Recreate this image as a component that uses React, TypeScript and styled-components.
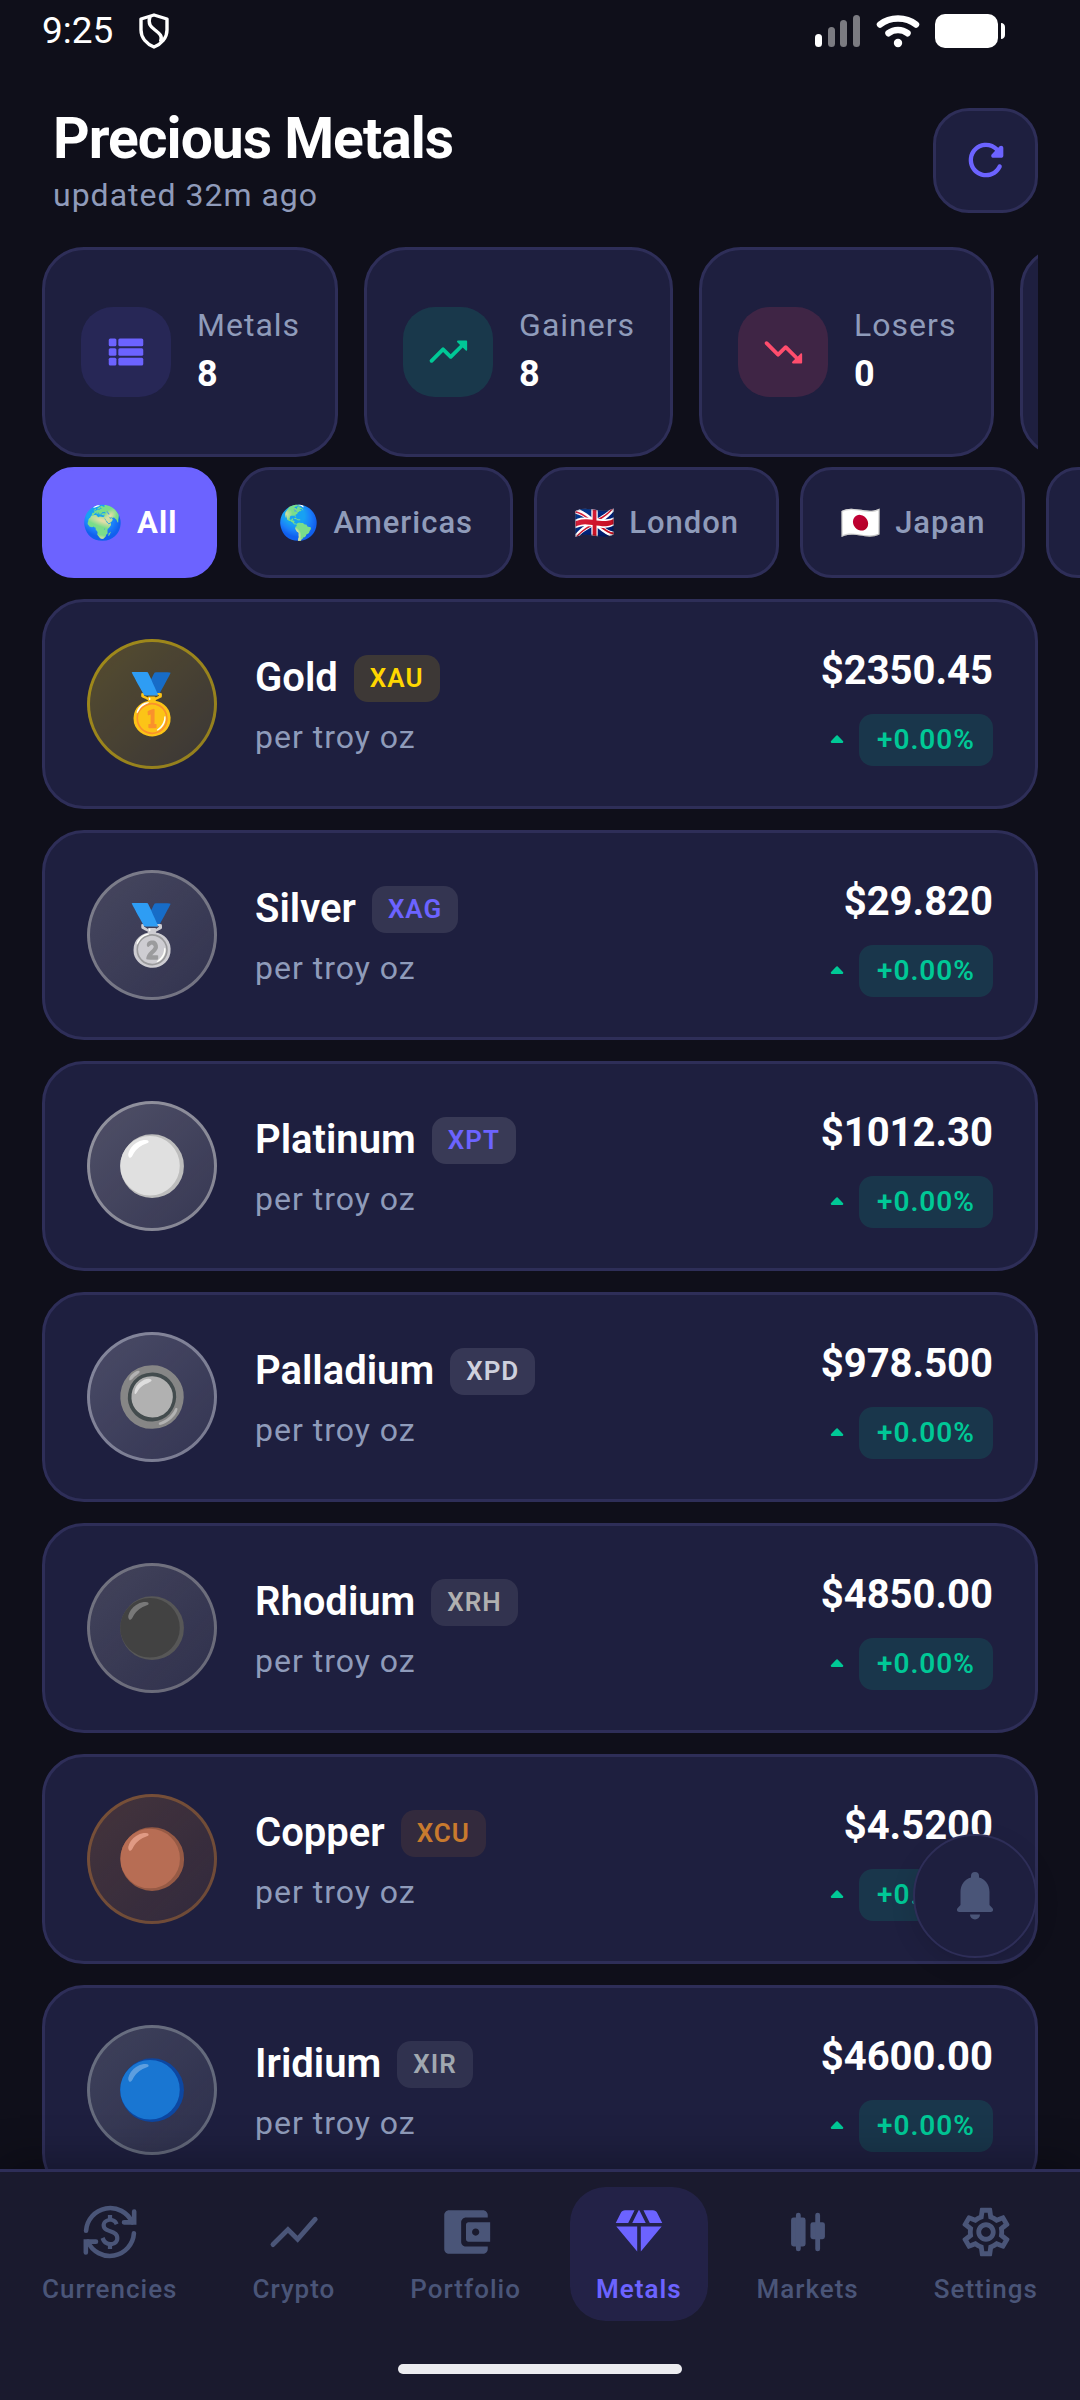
import React from "react";
import styled, { createGlobalStyle } from "styled-components";
import { MdOutlineSettings } from "react-icons/md";

const color = {
  page: "#0f0f1a",
  card: "#1e1f3f",
  line: "#2e2e58",
  nav: "#1a1a2e",
  primary: "#6c63ff",
  up: "#00c896",
  down: "#ff4d6d",
  muted: "#8f9bba",
  idle: "#4a5578",
  white: "#ffffff",
};

const GlobalStyle = createGlobalStyle`
  *, *::before, *::after { box-sizing: border-box; }
  body {
    margin: 0;
    background: ${color.page};
    color: ${color.white};
    font-family: Roboto, "Noto Color Emoji", sans-serif;
  }
  button { font: inherit; color: inherit; cursor: pointer; }
  svg { display: block; flex: none; }
`;

/* ---------- page frame ---------- */

const Screen = styled.div`
  position: relative;
  display: flex;
  flex-direction: column;
  height: 100vh;
  overflow: hidden;
`;

const StatusBar = styled.div`
  display: flex;
  align-items: center;
  justify-content: space-between;
  height: 62px;
  padding: 0 74px 0 42px;
`;

const StatusGroup = styled.div`
  display: flex;
  align-items: center;
  gap: ${(p: { $gap: number }) => p.$gap}px;
`;

const Clock = styled.span`
  font-size: 37px;
  line-height: 42px;
`;

const Header = styled.header`
  display: flex;
  align-items: center;
  justify-content: space-between;
  padding: 42px 42px 0 53px;
`;

const Title = styled.h1`
  margin: 0;
  font-size: 57px;
  line-height: 70px;
  font-weight: 700;
  letter-spacing: -1px;
`;

const Updated = styled.p`
  margin: 0;
  font-size: 32px;
  line-height: 42px;
  letter-spacing: 1px;
  color: ${color.muted};
`;

const RefreshButton = styled.button`
  display: grid;
  place-items: center;
  width: 105px;
  height: 105px;
  padding: 0;
  border: 3px solid ${color.line};
  border-radius: 36px;
  background: ${color.card};
  color: ${color.primary};
`;

/* ---------- summary cards ---------- */

const Stats = styled.section`
  display: flex;
  flex: none;
  gap: 26px;
  margin: 31px 42px 0;
  overflow: hidden;
`;

const StatCard = styled.div`
  display: flex;
  flex: none;
  align-items: center;
  gap: 26px;
  min-width: 120px;
  height: 210px;
  padding: 0 35px 0 36px;
  border: 3px solid ${color.line};
  border-radius: 42px;
  background: ${color.card};
`;

const StatIcon = styled.span<{ $tone: string; $alpha: string }>`
  display: grid;
  place-items: center;
  width: 90px;
  height: 90px;
  border-radius: 32px;
  color: ${(p) => p.$tone};
  background: ${(p) => p.$tone + p.$alpha};
`;

const StatText = styled.div`
  display: flex;
  flex-direction: column;
  gap: 5px;
`;

const Caption = styled.span`
  font-size: 32px;
  line-height: 38px;
  letter-spacing: 1px;
  color: ${color.muted};
`;

const StatValue = styled.strong`
  font-size: 36px;
  line-height: 50px;
  font-weight: 700;
`;

/* ---------- region filter ---------- */

const Filters = styled.div`
  display: flex;
  flex: none;
  gap: 21px;
  margin-top: 10px;
  padding-left: 42px;
  overflow: hidden;
`;

const Chip = styled.button<{ $active?: boolean }>`
  display: flex;
  flex: none;
  align-items: center;
  gap: 14px;
  min-width: 120px;
  height: 111px;
  padding: 0 37px;
  border: 3px solid ${(p) => (p.$active ? color.primary : color.line)};
  border-radius: 32px;
  background: ${(p) => (p.$active ? color.primary : color.card)};
  color: ${(p) => (p.$active ? color.white : color.muted)};
  font-size: 31px;
  line-height: 38px;
  font-weight: ${(p) => (p.$active ? 700 : 500)};
  letter-spacing: 1px;
`;

const Flag = styled.span`
  font-size: 33px;
  line-height: 38px;
  letter-spacing: 0;
`;

/* ---------- metal list ---------- */

const MetalList = styled.ul`
  display: flex;
  flex: 1;
  flex-direction: column;
  gap: 21px;
  min-height: 0;
  margin: 21px 42px 0;
  padding: 0;
  overflow: hidden;
  list-style: none;
`;

const MetalRow = styled.li`
  display: flex;
  flex: none;
  align-items: center;
  gap: 38px;
  height: 210px;
  padding: 0 42px;
  border: 3px solid ${color.line};
  border-radius: 42px;
  background: ${color.card};
`;

const Medallion = styled.span<{ $tone: string }>`
  display: grid;
  flex: none;
  place-items: center;
  width: 130px;
  height: 130px;
  border: 3px solid ${(p) => p.$tone}73;
  border-radius: 50%;
  background: linear-gradient(135deg, ${(p) => p.$tone}40, ${(p) => p.$tone}20) border-box;
  font-size: 58px;
  line-height: 68px;
`;

const MetalInfo = styled.div`
  display: flex;
  flex: 1;
  flex-direction: column;
  gap: 16px;
  padding-top: 2px;
`;

const NameLine = styled.div`
  display: flex;
  align-items: center;
  gap: 16px;
`;

const MetalName = styled.h2`
  margin: 0;
  font-size: 40px;
  line-height: 46px;
  font-weight: 600;
`;

const Symbol = styled.span<{ $tone: string; $ink: string }>`
  padding: 0 16px;
  border-radius: 14px;
  background: ${(p) => p.$tone}24;
  color: ${(p) => p.$ink};
  font-size: 26px;
  line-height: 47px;
  font-weight: 600;
  letter-spacing: 1px;
`;

const Quote = styled.div`
  display: flex;
  flex-direction: column;
  align-items: flex-end;
  gap: 15px;
`;

const Price = styled.strong`
  font-size: 40px;
  line-height: 56px;
  font-weight: 700;
`;

const ChangeLine = styled.div`
  display: flex;
  align-items: center;
  gap: 15px;
`;

const Change = styled.span`
  padding: 0 18px;
  border-radius: 14px;
  background: ${color.up}24;
  color: ${color.up};
  font-size: 28px;
  line-height: 52px;
  font-weight: 600;
  letter-spacing: 1px;
`;

/* ---------- floating alert button and bottom bar ---------- */

const AlertButton = styled.button`
  position: absolute;
  right: 43px;
  bottom: 442px;
  display: grid;
  place-items: center;
  width: 124px;
  height: 124px;
  padding: 0;
  border: 2px solid ${color.line};
  border-radius: 50%;
  background: ${color.card};
  color: ${color.idle};
  box-shadow: 0 8px 24px rgba(0, 0, 0, 0.12);
`;

const BottomBar = styled.footer`
  position: relative;
  flex: none;
  height: 231px;
  border-top: 3px solid ${color.line};
  background: ${color.nav};
  box-shadow: 0 -8px 40px rgba(0, 0, 0, 0.3);
`;

const Tabs = styled.nav`
  display: flex;
  justify-content: space-between;
  padding: 15px 16px 0;
`;

const Tab = styled.button<{ $active?: boolean }>`
  display: flex;
  flex-direction: column;
  align-items: center;
  gap: 12px;
  height: 134px;
  padding: 16px 26px 0;
  border: 0;
  border-radius: 36px;
  background: ${(p) => (p.$active ? color.primary + "1f" : "transparent")};
  color: ${(p) => (p.$active ? color.primary : color.idle)};
  font-size: 26px;
  line-height: 32px;
  font-weight: ${(p) => (p.$active ? 600 : 500)};
  letter-spacing: 1px;
`;

const HomeIndicator = styled.div`
  width: 284px;
  height: 10px;
  margin: 43px auto 0;
  border-radius: 5px;
  background: #ececf0;
`;

/* ---------- drawings ---------- */

type IconProps = { size: number; children: React.ReactNode };

const Icon = ({ size, children }: IconProps) => (
  <svg width={size} height={size} viewBox="0 0 24 24" fill="currentColor" aria-hidden="true">
    {children}
  </svg>
);

const ShieldIcon = () => (
  <svg width="30" height="36" viewBox="0 0 30 36" fill="none" stroke="#fff" strokeWidth="3.4" strokeLinejoin="round" aria-hidden="true">
    <path d="M15 2 28 6V17C28 25 22 31 15 34 8 31 2 25 2 17V6Z" />
    <path d="M11 3.500C8.500 11 12 14 16 17 20.500 20.500 24 23 21.500 29" />
  </svg>
);

const SignalIcon = () => (
  <svg width="46" height="34" viewBox="0 0 46 34" fill="#fff" aria-hidden="true">
    <rect x="0" y="20" width="7" height="13" rx="3.500" />
    <g opacity="0.45">
      <rect x="13" y="13" width="7" height="20" rx="3.500" />
      <rect x="25" y="6" width="7" height="27" rx="3.500" />
      <rect x="38" y="1" width="7" height="32" rx="3.500" />
    </g>
  </svg>
);

const WifiIcon = () => (
  <svg width="44" height="34" viewBox="0 0 44 34" fill="none" stroke="#fff" strokeWidth="6.500" strokeLinecap="round" aria-hidden="true">
    <path d="M4 10.500C14 2.500 30 2.500 40 10.500" />
    <path d="M12.500 19.200C18 15 26 15 31.500 19.200" />
    <circle cx="22" cy="29" r="4.200" fill="#fff" stroke="none" />
  </svg>
);

const BatteryIcon = () => (
  <svg width="71" height="34" viewBox="0 0 71 34" fill="#fff" aria-hidden="true">
    <rect width="63" height="34" rx="10" />
    <path d="M66 9C68.500 9 70 11 70 13V21C70 23 68.500 25 66 25Z" />
  </svg>
);

const RefreshIcon = () => (
  <Icon size={52}>
    <path d="M17.650 6.350c-1.630-1.630-3.940-2.570-6.480-2.310-3.670.37-6.690 3.350-7.100 7.020C3.520 15.910 7.270 20 12 20c3.190 0 5.930-1.870 7.210-4.560.32-.67-.16-1.440-.9-1.440-.37 0-.72.2-.88.53-1.130 2.430-3.840 3.970-6.800 3.310-2.220-.49-4.010-2.300-4.480-4.520C5.310 9.440 8.260 6 12 6c1.660 0 3.140.69 4.220 1.780l-1.510 1.510c-.63.63-.19 1.710.7 1.710H19c.55 0 1-.45 1-1V6.410c0-.89-1.080-1.340-1.710-.71l-.64.65z" />
  </Icon>
);

const ListIcon = () => (
  <Icon size={46}>
    {[5, 10, 15].map((y) => (
      <React.Fragment key={y}>
        <rect x="3" y={y} width="4" height="4" rx="0.800" />
        <rect x="8" y={y} width="13" height="4" rx="0.800" />
      </React.Fragment>
    ))}
  </Icon>
);

const trendPath =
  "M16.850 6.850l1.440 1.440-4.880 4.880-3.290-3.290a.996.996 0 0 0-1.410 0l-6 6.010a.996.996 0 1 0 1.410 1.410L9.410 12l3.290 3.290c.39.39 1.020.39 1.410 0l5.590-5.580 1.440 1.440c.31.31.85.09.85-.35V6.500a.48.48 0 0 0-.49-.5h-4.290c-.45 0-.67.54-.36.85z";

const TrendUpIcon = () => (
  <Icon size={46}>
    <path d={trendPath} />
  </Icon>
);

const TrendDownIcon = () => (
  <Icon size={46}>
    <path d={trendPath} transform="matrix(1 0 0 -1 0 24)" />
  </Icon>
);

const CaretUp = () => (
  <svg width="14" height="9" viewBox="0 0 14 9" aria-hidden="true">
    <path d="M7 1.500 12 6.800H2Z" fill={color.up} stroke={color.up} strokeWidth="2.500" strokeLinejoin="round" />
  </svg>
);

const BellIcon = () => (
  <svg width="36" height="48" viewBox="0 0 36 48" fill="currentColor" aria-hidden="true">
    <path d="M18 0a4 4 0 0 1 4 4v1.500C28.500 7.300 32.500 13 32.500 20V33L35.500 36.300C36.700 38 35.800 40 33.800 40H2.200C.2 40-.7 38 .5 36.300L3.500 33V20C3.500 13 7.500 7.300 14 5.500V4a4 4 0 0 1 4-4Z" />
    <path d="M13 42.500H23A5 5 0 0 1 13 42.500Z" />
  </svg>
);

const CurrencyIcon = () => (
  <Icon size={58}>
    <g fill="none" stroke="currentColor" strokeWidth="1.900" strokeLinecap="round">
      <path d="M2.100 11.500A10 10 0 0 1 21.200 8" />
      <path d="M22 3.500V8H17.800" />
      <path d="M21.900 12.500A10 10 0 0 1 2.800 16" />
      <path d="M2 20.500V16H6.200" />
    </g>
    <path d="M12.890 11.100c-1.780-.59-2.640-.96-2.640-1.900 0-1.020 1.110-1.390 1.810-1.390 1.310 0 1.790.99 1.900 1.340l1.580-.67c-.15-.44-.82-1.910-2.660-2.230V5h-1.750v1.260c-2.600.56-2.620 2.850-2.620 2.960 0 2.270 2.250 2.910 3.350 3.310 1.580.56 2.280 1.070 2.280 2.030 0 1.130-1.050 1.610-1.980 1.610-1.820 0-2.340-1.870-2.400-2.090l-1.660.67c.63 2.190 2.280 2.780 3.020 2.960V19h1.750v-1.240c.52-.09 3.020-.59 3.020-3.220.01-1.390-.6-2.610-3-3.440z" />
  </Icon>
);

const ChartIcon = () => (
  <Icon size={58}>
    <path d="M3.300 17.200 9.500 11 13.500 15 20.800 6.700" fill="none" stroke="currentColor" strokeWidth="2" strokeLinecap="round" />
  </Icon>
);

const WalletIcon = () => (
  <Icon size={58}>
    <path d="M10 16V8c0-1.100.89-2 2-2h9V5c0-1.100-.9-2-2-2H5c-1.110 0-2 .9-2 2v14c0 1.100.89 2 2 2h14c1.100 0 2-.9 2-2v-1h-9c-1.110 0-2-.9-2-2zm3-8c-.55 0-1 .45-1 1v6c0 .55.45 1 1 1h9V8h-9zm3 5.500c-.83 0-1.500-.67-1.500-1.500s.67-1.500 1.500-1.500 1.500.67 1.500 1.500-.67 1.500-1.500 1.500z" />
  </Icon>
);

const DiamondIcon = () => (
  <Icon size={58}>
    <path d="M12.160 3h-.32L9.210 8.250h5.580zM16.460 8.250h5.160l-2.070-4.140C19.210 3.430 18.520 3 17.760 3h-3.920zM21.380 9.750h-8.630V20.100zM11.250 20.100V9.750H2.620zM7.540 8.250 10.160 3H6.240c-.76 0-1.450.43-1.790 1.110L2.380 8.250z" />
  </Icon>
);

const CandlesIcon = () => (
  <Icon size={58}>
    <rect x="5" y="6" width="6" height="12" rx="1" />
    <rect x="7" y="4" width="2" height="16" rx="1" />
    <rect x="13" y="8" width="6" height="7" rx="1" />
    <rect x="15" y="4" width="2" height="16" rx="1" />
  </Icon>
);

/* ---------- data ---------- */

const stats = [
  { label: "Metals", value: 8, tone: color.primary, alpha: "1f", icon: <ListIcon /> },
  { label: "Gainers", value: 8, tone: color.up, alpha: "26", icon: <TrendUpIcon /> },
  { label: "Losers", value: 0, tone: color.down, alpha: "26", icon: <TrendDownIcon /> },
];

const regions = [
  { flag: "🌍", label: "All" },
  { flag: "🌎", label: "Americas" },
  { flag: "🇬🇧", label: "London" },
  { flag: "🇯🇵", label: "Japan" },
];

const metals = [
  { name: "Gold", symbol: "XAU", emoji: "🥇", tone: "#ffd700", ink: "#ffd700", price: "$2350.45" },
  { name: "Silver", symbol: "XAG", emoji: "🥈", tone: "#c0c0c0", ink: color.primary, price: "$29.820" },
  { name: "Platinum", symbol: "XPT", emoji: "⚪", tone: "#e5e4e2", ink: color.primary, price: "$1012.30" },
  { name: "Palladium", symbol: "XPD", emoji: "🔘", tone: "#ced0dd", ink: "#ced0dd", price: "$978.500" },
  { name: "Rhodium", symbol: "XRH", emoji: "⚫", tone: "#b0b0b0", ink: "#b0b0b0", price: "$4850.00" },
  { name: "Copper", symbol: "XCU", emoji: "🟤", tone: "#b87333", ink: "#c87a2e", price: "$4.5200" },
  { name: "Iridium", symbol: "XIR", emoji: "🔵", tone: "#a0a8b0", ink: "#a0a8b0", price: "$4600.00" },
];

const tabs = [
  { label: "Currencies", icon: <CurrencyIcon /> },
  { label: "Crypto", icon: <ChartIcon /> },
  { label: "Portfolio", icon: <WalletIcon /> },
  { label: "Metals", icon: <DiamondIcon />, active: true },
  { label: "Markets", icon: <CandlesIcon /> },
  { label: "Settings", icon: <MdOutlineSettings size={58} /> },
];

export default function App() {
  return (
    <>
      <GlobalStyle />
      <Screen>
        <StatusBar>
          <StatusGroup $gap={26}>
            <Clock>9:25</Clock>
            <ShieldIcon />
          </StatusGroup>
          <StatusGroup $gap={15}>
            <SignalIcon />
            <WifiIcon />
            <BatteryIcon />
          </StatusGroup>
        </StatusBar>

        <Header>
          <div>
            <Title>Precious Metals</Title>
            <Updated>updated 32m ago</Updated>
          </div>
          <RefreshButton type="button">
            <RefreshIcon />
          </RefreshButton>
        </Header>

        <Stats>
          {stats.map((s) => (
            <StatCard key={s.label}>
              <StatIcon $tone={s.tone} $alpha={s.alpha}>{s.icon}</StatIcon>
              <StatText>
                <Caption>{s.label}</Caption>
                <StatValue>{s.value}</StatValue>
              </StatText>
            </StatCard>
          ))}
          <StatCard />
        </Stats>

        <Filters>
          {regions.map((r, i) => (
            <Chip key={r.label} type="button" $active={i === 0}>
              <Flag>{r.flag}</Flag>
              {r.label}
            </Chip>
          ))}
          <Chip type="button" />
        </Filters>

        <MetalList>
          {metals.map((m) => (
            <MetalRow key={m.symbol}>
              <Medallion $tone={m.tone}>{m.emoji}</Medallion>
              <MetalInfo>
                <NameLine>
                  <MetalName>{m.name}</MetalName>
                  <Symbol $tone={m.tone} $ink={m.ink}>{m.symbol}</Symbol>
                </NameLine>
                <Caption>per troy oz</Caption>
              </MetalInfo>
              <Quote>
                <Price>{m.price}</Price>
                <ChangeLine>
                  <CaretUp />
                  <Change>+0.00%</Change>
                </ChangeLine>
              </Quote>
            </MetalRow>
          ))}
        </MetalList>

        <BottomBar>
          <Tabs>
            {tabs.map((t) => (
              <Tab key={t.label} type="button" $active={t.active}>
                {t.icon}
                {t.label}
              </Tab>
            ))}
          </Tabs>
          <HomeIndicator />
        </BottomBar>

        <AlertButton type="button">
          <BellIcon />
        </AlertButton>
      </Screen>
    </>
  );
}
